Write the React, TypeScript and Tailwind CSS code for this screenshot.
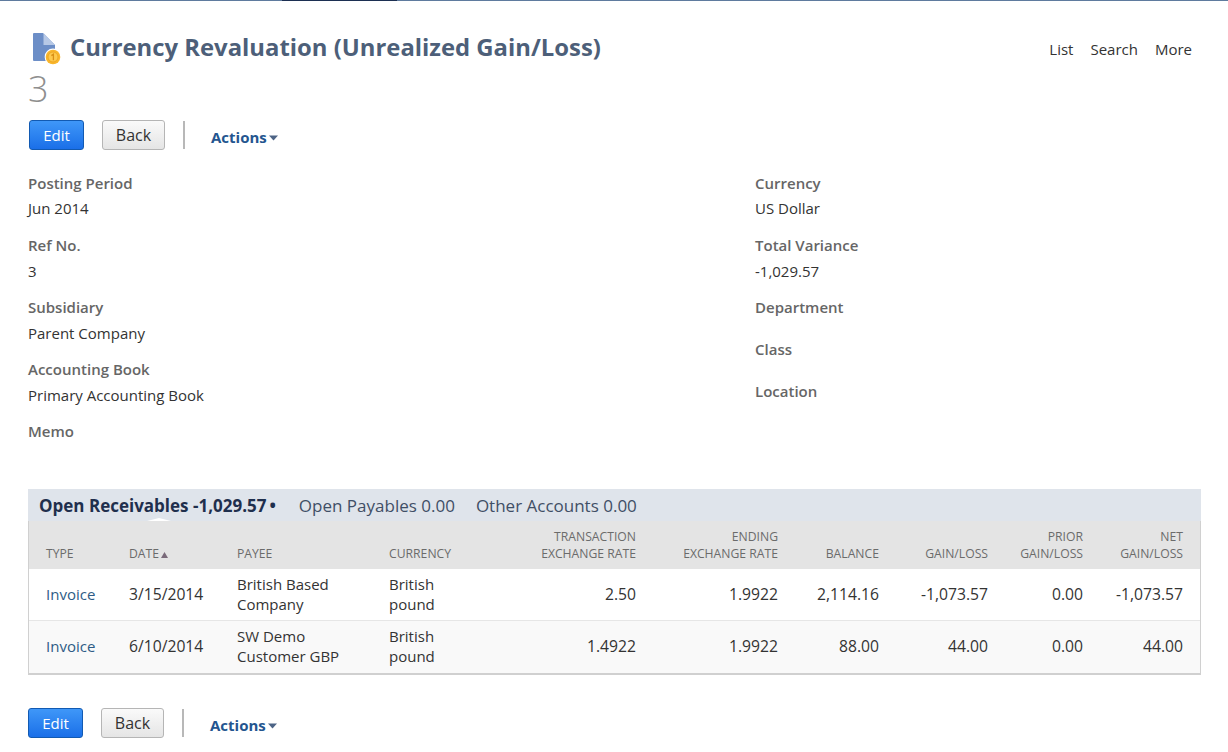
const ActionBar = ({ className = "" }: { className?: string }) => (
  <div className={`flex items-center ${className}`}>
    <button className="h-[30px] w-[55px] rounded-[3px] border border-[#125ab2] bg-gradient-to-b from-[#3f97f8] to-[#1a6fe8] text-[15px] font-medium text-white">
      Edit
    </button>
    <button className="ml-[18px] h-[30px] w-[63px] rounded-[3px] border border-[#b5b5b5] bg-gradient-to-b from-[#fafafa] to-[#e5e5e5] text-[16px] text-[#333]">
      Back
    </button>
    <div className="ml-[18px] h-[28px] w-[2px] bg-[#b8b8b8]" />
    <div className="ml-[26px] mt-[4px] flex items-center text-[15px] font-bold text-[#24558f]">
      Actions
      <svg width="9" height="6" viewBox="0 0 9 6" className="ml-[2px] mt-[2px]">
        <path d="M0 0.5h9L4.5 5.5z" fill="#4d6486" />
      </svg>
    </div>
  </div>
);

const Field = ({ label, value, className = "", valueClass = "mt-[6px]" }: { label: string; value?: string; className?: string; valueClass?: string }) => (
  <div className={className}>
    <div className="text-[15px] leading-[20px] font-semibold text-[#666]">{label}</div>
    {value && <div className={`${valueClass} text-[15px] leading-[20px] text-[#333]`}>{value}</div>}
  </div>
);

const rows = [
  { date: "3/15/2014", payee: ["British Based", "Company"], rate: "2.50", balance: "2,114.16", gain: "-1,073.57", net: "-1,073.57", bg: "bg-white", h: "h-[51px]" },
  { date: "6/10/2014", payee: ["SW Demo", "Customer GBP"], rate: "1.4922", balance: "88.00", gain: "44.00", net: "44.00", bg: "bg-[#f9f9f9] [&>td]:pb-[2px]", h: "h-[53px]" },
];

const CoinDoc = () => (
  <svg width="32" height="36" viewBox="0 0 32 36">
    <path d="M4 2h9l12 12v15a1 1 0 0 1-1 1H4a1 1 0 0 1-1-1V3a1 1 0 0 1 1-1z" fill="#6c8ec7" />
    <path d="M13.5 2 25 14H13.5z" fill="#b6c8e6" />
    <circle cx="23" cy="26" r="8.4" fill="#fff" />
    <circle cx="23" cy="26" r="7.3" fill="#f9b62c" />
    <circle cx="23" cy="26" r="5" fill="#fdc94d" stroke="#e9a11e" strokeWidth="0.8" />
    <path d="M21.4 24.6 23.4 23.2V29.2" fill="none" stroke="#d98f15" strokeWidth="1.3" />
  </svg>
);

export default function App() {
  return (
    <div className="relative h-[752px] w-[1228px] overflow-hidden bg-white font-['Open_Sans',sans-serif]">
      <div className="flex h-[1px] bg-[#5f7b9e]">
        <div className="ml-[282px] w-[115px] bg-[#1c2f52]" />
      </div>

      <div className="flex items-start pl-[30px] pr-[36px] pt-[30px]">
        <CoinDoc />
        <h1 className="ml-[8px] mt-[-2px] text-[23.85px] leading-[36px] font-bold text-[#4d5f79]">
          Currency Revaluation (Unrealized Gain/Loss)
        </h1>
        <div className="ml-auto mt-[8px] flex gap-[17px] text-[15px] leading-[20px] text-[#333]">
          <span>List</span>
          <span>Search</span>
          <span>More</span>
        </div>
      </div>

      <div className="ml-[28px] mt-[2px] text-[36px] leading-[40px] font-light text-[#8f8f8f]">3</div>

      <ActionBar className="ml-[29px] mt-[11px]" />

      <div className="mt-[23px] flex px-[28px]">
        <div className="w-[727px]">
          <Field label="Posting Period" value="Jun 2014" valueClass="mt-[5px]" />
          <Field label="Ref No." value="3" className="mt-[17px]" />
          <Field label="Subsidiary" value="Parent Company" className="mt-[16px]" />
          <Field label="Accounting Book" value="Primary Accounting Book" className="mt-[16px]" />
          <Field label="Memo" className="mt-[16px]" />
        </div>
        <div>
          <Field label="Currency" value="US Dollar" valueClass="mt-[5px]" />
          <Field label="Total Variance" value="-1,029.57" className="mt-[17px]" />
          <Field label="Department" className="mt-[16px]" />
          <Field label="Class" className="mt-[22px]" />
          <Field label="Location" className="mt-[22px]" />
        </div>
      </div>

      <div className="mx-[28px] mt-[48px] w-[1173px]">
        <div className="relative flex h-[32px] items-center bg-[#dfe4eb] pl-[11px] pt-[2px] text-[17px]">
          <span className="font-bold text-[#1f2f4d]">Open Receivables -1,029.57</span>
          <span className="ml-[3px] font-bold text-[#1f2f4d]">•</span>
          <span className="ml-[23px] text-[#3f4f66]">Open Payables 0.00</span>
          <span className="ml-[21px] text-[#3f4f66]">Other Accounts 0.00</span>
          <div className="absolute bottom-0 left-[119px] h-0 w-0 border-x-[12px] border-b-[3px] border-x-transparent border-b-white" />
        </div>
        <div className="border border-t-0 border-[#d0d0d0] border-b-2">
          <table className="w-full table-fixed border-collapse text-[15px] text-[#333]">
            <colgroup>
              <col className="w-[100px]" />
              <col className="w-[108px]" />
              <col className="w-[152px]" />
              <col className="w-[100px]" />
              <col className="w-[147px]" />
              <col className="w-[142px]" />
              <col className="w-[101px]" />
              <col className="w-[109px]" />
              <col className="w-[95px]" />
              <col />
            </colgroup>
            <thead>
              <tr className="h-[48px] bg-[#e4e4e4] text-[12.2px] leading-[17px] text-[#6b6b6b] [&>th]:pb-[7px] [&>th]:align-bottom [&>th]:font-normal">
                <th className="pl-[17px] text-left">TYPE</th>
                <th className="text-left">
                  DATE
                  <svg width="7" height="6" viewBox="0 0 7 6" className="ml-[2px] inline-block">
                    <path d="M0 6 3.5 0 7 6z" fill="#7a6a7a" />
                  </svg>
                </th>
                <th className="text-left">PAYEE</th>
                <th className="text-left">CURRENCY</th>
                <th className="text-right">TRANSACTION<br />EXCHANGE RATE</th>
                <th className="text-right">ENDING<br />EXCHANGE RATE</th>
                <th className="text-right">BALANCE</th>
                <th className="text-right">GAIN/LOSS</th>
                <th className="text-right">PRIOR<br />GAIN/LOSS</th>
                <th className="pr-[17px] text-right">NET<br />GAIN/LOSS</th>
              </tr>
            </thead>
            <tbody className="leading-[20px]">
              {rows.map((r) => (
                <tr key={r.date} className={`${r.h} ${r.bg} border-b border-[#e6e6e6] last:border-b-0`}>
                  <td className="pl-[17px] text-[#2e5c86]">Invoice</td>
                  <td className="text-[15.7px]">{r.date}</td>
                  <td>{r.payee[0]}<br />{r.payee[1]}</td>
                  <td>British<br />pound</td>
                  <td className="text-right text-[15.7px]">{r.rate}</td>
                  <td className="text-right text-[15.7px]">1.9922</td>
                  <td className="text-right text-[15.7px]">{r.balance}</td>
                  <td className="text-right text-[15.7px]">{r.gain}</td>
                  <td className="text-right text-[15.7px]">0.00</td>
                  <td className="pr-[17px] text-right text-[15.7px]">{r.net}</td>
                </tr>
              ))}
            </tbody>
          </table>
        </div>
      </div>

      <ActionBar className="ml-[28px] mt-[33px]" />
    </div>
  );
}
